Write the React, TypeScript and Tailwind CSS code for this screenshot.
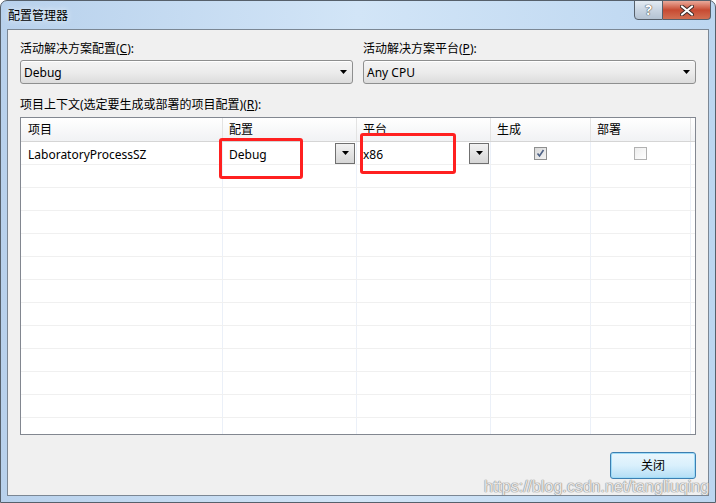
import React from 'react';

const rows = Array.from({ length: 13 });

const Arrow: React.FC = () => (
  <svg width="7" height="4" viewBox="0 0 7 4">
    <path d="M0 0 H7 L3.5 4 Z" fill="#000" />
  </svg>
);

const ComboBox: React.FC<{ value: string }> = ({ value }) => (
  <div className="h-[24px] flex items-center justify-between rounded-[3px] border border-[#8e8f8f] bg-gradient-to-b from-[#f4f4f4] via-[#ececec] to-[#dcdcdc] pl-[3px] pr-[5px] shadow-[inset_0_1px_0_#ffffff]">
    <span className="pt-[2px]">{value}</span>
    <Arrow />
  </div>
);

const CellButton: React.FC = () => (
  <div className="w-[20px] h-[21px] mr-[1px] flex items-center justify-center border border-[#707070] bg-gradient-to-b from-[#f2f2f2] to-[#d6d6d6]">
    <Arrow />
  </div>
);

const Check: React.FC<{ checked?: boolean }> = ({ checked }) => (
  <div
    className={`w-[13px] h-[13px] border flex items-center justify-center ${
      checked ? 'border-[#8e8f8f] bg-gradient-to-br from-[#d8d8d8] to-[#f4f4f4]' : 'border-[#b1b1b1] bg-gradient-to-br from-[#ededed] to-[#ffffff]'
    }`}
  >
    {checked && (
      <svg width="9" height="9" viewBox="0 0 9 9">
        <path d="M1.5 4.5 L3.5 7 L7.5 1" fill="none" stroke="#4d6185" strokeWidth="1.6" />
      </svg>
    )}
  </div>
);

const App: React.FC = () => {
  return (
    <div className="relative w-[716px] h-[503px] overflow-hidden font-['Noto_Sans','Noto_Sans_CJK_SC',sans-serif] text-[12px] leading-[14px] text-black">
      {/* 窗口外框 */}
      <div className="w-full h-full flex flex-col rounded-t-[7px] border border-[#56606b] bg-gradient-to-r from-[#b8d1ec] via-[#d2e5f7] to-[#bcd6f0] px-[6px] pb-[6px]">
        <div className="h-[28px] flex items-start justify-between">
          <div className="pt-[8px] pl-[1px] [text-shadow:0_0_6px_#ffffff]">配置管理器</div>
          <div className="flex mr-[-2px] mt-[-1px]">
            <div className="w-[29px] h-[20px] flex items-center justify-center rounded-bl-[4px] border border-[#56606b] bg-gradient-to-b from-[#e3ebf3] via-[#c9d5e2] to-[#b4c3d3] text-white font-bold text-[14px] [text-shadow:0_0_1px_#333,0_0_1px_#333]">
              ?
            </div>
            <div className="w-[48px] h-[20px] flex items-center justify-center rounded-br-[4px] border border-l-0 border-[#56606b] bg-gradient-to-b from-[#e9a99a] via-[#c74a32] to-[#d26f52]">
              <svg width="14" height="11" viewBox="0 0 14 11">
                <path d="M2 1.5 L12 9.5 M12 1.5 L2 9.5" stroke="#3b2a27" strokeWidth="4" strokeLinecap="round" />
                <path d="M2 1.5 L12 9.5 M12 1.5 L2 9.5" stroke="#ffffff" strokeWidth="2.2" strokeLinecap="round" />
              </svg>
            </div>
          </div>
        </div>

        {/* 内容区 */}
        <div className="flex-1 flex flex-col border border-[#7b8794] bg-[#f0f0f0] px-[12px] pt-[12px]">
          <div className="grid grid-cols-2 gap-x-[10px]">
            <div>
              <div className="h-[14px]">
                活动解决方案配置(<span className="underline">C</span>):
              </div>
              <div className="mt-[4px]">
                <ComboBox value="Debug" />
              </div>
            </div>
            <div>
              <div className="h-[14px]">
                活动解决方案平台(<span className="underline">P</span>):
              </div>
              <div className="mt-[4px]">
                <ComboBox value="Any CPU" />
              </div>
            </div>
          </div>

          <div className="mt-[14px] h-[14px]">
            项目上下文(选定要生成或部署的项目配置)(<span className="underline">R</span>):
          </div>

          {/* 项目表格 */}
          <div className="mt-[5px] h-[318px] border border-[#828790] bg-white overflow-hidden">
            <div className="h-[24px] flex border-b border-[#d5d5d5] bg-gradient-to-b from-[#ffffff] to-[#f1f2f4]">
              <div className="w-[202px] pl-[7px] pt-[1px] flex items-center border-r border-[#e3e3e3]">项目</div>
              <div className="w-[134px] pl-[6px] pt-[1px] flex items-center border-r border-[#e3e3e3]">配置</div>
              <div className="w-[134px] pl-[6px] pt-[1px] flex items-center border-r border-[#e3e3e3]">平台</div>
              <div className="w-[100px] pl-[6px] pt-[1px] flex items-center border-r border-[#e3e3e3]">生成</div>
              <div className="w-[100px] pl-[6px] pt-[1px] flex items-center border-r border-[#e3e3e3]">部署</div>
              <div className="flex-1" />
            </div>
            {rows.map((_, i) => (
              <div key={i} className="h-[23px] flex border-b border-[#f0f0f0]">
                <div className="w-[202px] pl-[7px] flex items-center border-r border-[#ebf0f8]">
                  {i === 0 && <span className="pt-[3px]">LaboratoryProcessSZ</span>}
                </div>
                <div className="w-[134px] pl-[6px] flex items-center justify-between border-r border-[#ebf0f8]">
                  {i === 0 && (
                    <>
                      <span className="pt-[3px]">Debug</span>
                      <CellButton />
                    </>
                  )}
                </div>
                <div className="w-[134px] pl-[6px] flex items-center justify-between border-r border-[#ebf0f8]">
                  {i === 0 && (
                    <>
                      <span className="pt-[3px]">x86</span>
                      <CellButton />
                    </>
                  )}
                </div>
                <div className="w-[100px] flex items-center justify-center border-r border-[#ebf0f8]">
                  {i === 0 && <Check checked />}
                </div>
                <div className="w-[100px] flex items-center justify-center border-r border-[#ebf0f8]">
                  {i === 0 && <Check />}
                </div>
                <div className="flex-1" />
              </div>
            ))}
          </div>

          <div className="mt-[17px] flex justify-end">
            <button className="w-[86px] h-[27px] rounded-[3px] border border-[#3c7fb1] bg-gradient-to-b from-[#eaf6fd] via-[#d9f0fc] to-[#b4def6] shadow-[inset_0_0_0_1px_#9fdcf8] text-[12px] pt-[1px]">
              关闭
            </button>
          </div>
        </div>
      </div>

      {/* 标注红框 */}
      <div className="absolute left-[219px] top-[138px] w-[84px] h-[41px] border-[3px] border-[#ff2020] rounded-[3px]" />
      <div className="absolute left-[360px] top-[133px] w-[96px] h-[41px] border-[3px] border-[#ff2020] rounded-[3px]" />

      {/* 水印 */}
      <div className="absolute left-[484px] top-[478px] font-['Liberation_Sans',sans-serif] text-[16px] leading-[18px] text-white/80 [text-shadow:0_0_1px_#8a8a8a,0_0_1px_#8a8a8a,0_0_1px_#8a8a8a]">
        https://blog.csdn.net/tangliuqing
      </div>
    </div>
  );
};

export default App;
